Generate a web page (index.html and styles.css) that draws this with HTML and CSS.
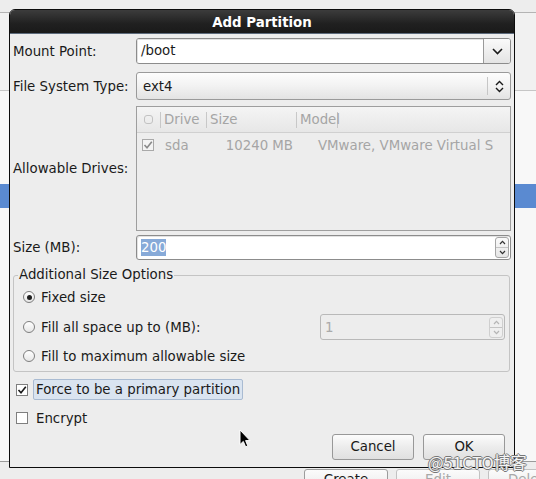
FILE: index.html
```html
<!DOCTYPE html>
<html>
<head>
<meta charset="utf-8">
<title>Add Partition</title>
<link rel="stylesheet" href="styles.css">
</head>
<body>
<div class="desk">
  <div class="band band-top"></div>
  <div class="band band-a"></div>
  <div class="band band-b"></div>
  <div class="band band-blue"></div>
  <div class="band band-c"></div>
  <div class="toolbar">
    <span class="tb-btn">Create</span>
    <span class="tb-btn dis">Edit</span>
    <span class="tb-btn dis">Delete</span>
  </div>
</div>

<div class="dialog">
  <div class="titlebar">Add Partition</div>
  <div class="dbody">
    <div class="row r-mount">
      <span class="lbl">Mount Point:</span>
      <div class="combo-entry">
        <span class="ce-text">/boot</span>
        <span class="ce-btn"><svg width="11" height="7" viewBox="0 0 11 7"><path d="M1 1 L5.5 5.5 L10 1" fill="none" stroke="#1a1a1a" stroke-width="1.6"/></svg></span>
      </div>
    </div>
    <div class="row r-fs">
      <span class="lbl">File System Type:</span>
      <div class="combo">
        <span class="cb-text">ext4</span>
        <span class="cb-sep"></span>
        <span class="cb-arrows"><svg width="9" height="13" viewBox="0 0 9 13"><path d="M1 5 L4.5 1.5 L8 5 M1 8 L4.5 11.5 L8 8" fill="none" stroke="#1a1a1a" stroke-width="1.4"/></svg></span>
      </div>
    </div>
    <div class="row r-drives">
      <span class="lbl">Allowable Drives:</span>
      <div class="list">
        <div class="lhead">
          <span class="hc hc-chk"><span class="mini-box"></span></span>
          <span class="hc hc-drive">Drive</span>
          <span class="hc hc-size">Size</span>
          <span class="hc hc-model">Model</span>
        </div>
        <div class="lrow">
          <span class="rc rc-chk"><span class="chk dis"><svg width="10" height="10" viewBox="0 0 10 10"><path d="M1.5 5 L4 7.8 L8.8 1.8" fill="none" stroke="#8a8a8a" stroke-width="1.6"/></svg></span></span>
          <span class="rc rc-drive">sda</span>
          <span class="rc rc-size">10240 MB</span>
          <span class="rc rc-model">VMware, VMware Virtual S</span>
        </div>
      </div>
    </div>
    <div class="row r-size">
      <span class="lbl">Size (MB):</span>
      <div class="spin">
        <span class="sp-text"><span class="sel">200</span></span>
        <span class="sp-btns">
          <span class="sp-b"><svg width="7" height="5" viewBox="0 0 7 5"><path d="M1 4 L3.5 1.3 L6 4" fill="none" stroke="#333" stroke-width="1.2"/></svg></span>
          <span class="sp-b"><svg width="7" height="5" viewBox="0 0 7 5"><path d="M1 1 L3.5 3.7 L6 1" fill="none" stroke="#333" stroke-width="1.2"/></svg></span>
        </span>
      </div>
    </div>

    <fieldset class="frame">
      <legend>Additional Size Options</legend>
      <div class="opt o1"><span class="radio on"></span><span>Fixed size</span></div>
      <div class="opt o2"><span class="radio"></span><span>Fill all space up to (MB):</span>
        <div class="spin small dis">
          <span class="sp-text">1</span>
          <span class="sp-btns">
            <span class="sp-b"><svg width="7" height="5" viewBox="0 0 7 5"><path d="M1 4 L3.5 1.3 L6 4" fill="none" stroke="#b5b5b5" stroke-width="1.2"/></svg></span>
            <span class="sp-b"><svg width="7" height="5" viewBox="0 0 7 5"><path d="M1 1 L3.5 3.7 L6 1" fill="none" stroke="#b5b5b5" stroke-width="1.2"/></svg></span>
          </span>
        </div>
      </div>
      <div class="opt o3"><span class="radio"></span><span>Fill to maximum allowable size</span></div>
    </fieldset>

    <div class="crow c1">
      <span class="chk"><svg width="10" height="10" viewBox="0 0 10 10"><path d="M1.5 5 L4 7.8 L8.8 1.8" fill="none" stroke="#1a1a1a" stroke-width="1.6"/></svg></span>
      <span class="focus">Force to be a primary partition</span>
    </div>
    <div class="crow c2">
      <span class="chk"></span>
      <span class="plain">Encrypt</span>
    </div>

    <div class="brow">
      <span class="btn">Cancel</span>
      <span class="btn">OK</span>
    </div>
  </div>
</div>

<div class="watermark">@51CTO博客</div>

<svg class="cursor" width="13" height="20" viewBox="0 0 13 20"><path d="M1 1 L1 15.5 L4.3 12.4 L6.6 17.8 L8.8 16.9 L6.6 11.6 L11 11.6 Z" fill="#000" stroke="#fff" stroke-width="1"/></svg>
</body>
</html>
```

FILE: styles.css
```css
* { box-sizing: border-box; }
html, body { margin: 0; padding: 0; }
body {
  width: 536px;
  height: 479px;
  overflow: hidden;
  position: relative;
  background: #ededed;
  font-family: "DejaVu Sans", "Noto Sans CJK SC", sans-serif;
  font-size: 13.33px;
  color: #1a1a1a;
}

/* background application */
.desk { display: flex; flex-direction: column; height: 479px; }
.band { flex: none; }
.band-top { height: 13px; background: #ededed; border-bottom: 1px solid #b4b4b4; }
.band-a { height: 78px; background: #f1f1f1; border-bottom: 1px solid #c6c6c6; }
.band-b { height: 93px; background: #f8f8f8; }
.band-blue { height: 24px; background: #5a8ad1; }
.band-c { height: 254px; background: #f7f7f7; border-bottom: 1px solid #9a9a9a; }
.toolbar {
  flex: 1;
  background: #ededed;
  display: flex;
  gap: 8px;
  padding: 7px 0 0 304px;
  overflow: hidden;
}
.tb-btn {
  flex: none;
  width: 84px;
  height: 26px;
  border: 1px solid #9c9c9c;
  border-radius: 3px;
  background: linear-gradient(#fbfbfb, #e6e6e6);
  text-align: center;
  line-height: 20px;
  padding-top: 0;
}
.tb-btn.dis { color: #a8a8a8; border-color: #c2c2c2; }

/* dialog */
.dialog {
  position: absolute;
  left: 9px;
  top: 9px;
  width: 506px;
  border: 1px solid #0c0c0c;
  border-radius: 6px 6px 0 0;
  background: #ededed;
}
.titlebar {
  height: 24px;
  line-height: 25px;
  text-align: center;
  font-weight: bold;
  color: #ffffff;
  background: linear-gradient(#3c3c3c, #202020 60%, #1a1a1a);
  border-radius: 5px 5px 0 0;
  border-bottom: 1px solid #5d6b7c;
}
.dbody {
  padding: 4px 3px 7px 3px;
  display: flex;
  flex-direction: column;
}
.row { display: flex; align-items: center; }
.lbl { width: 123px; flex: none; }
.r-mount { height: 26px; }
.r-fs { height: 28px; margin-top: 8px; }
.r-drives { height: 125px; margin-top: 6px; }
.r-size { height: 25px; margin-top: 4px; }

.combo-entry {
  flex: 1;
  height: 100%;
  display: flex;
  border: 1px solid #8c8c8c;
  border-radius: 3px;
  overflow: hidden;
  background: #fff;
}
.ce-text {
  flex: 1;
  padding-left: 4px;
  line-height: 24px;
  box-shadow: inset 1px 1px 0 #e2e2e2;
}
.ce-btn {
  width: 27px;
  flex: none;
  border-left: 1px solid #9a9a9a;
  background: linear-gradient(#fafafa, #e4e4e4);
  display: flex;
  align-items: center;
  justify-content: center;
}

.combo {
  flex: 1;
  height: 100%;
  display: flex;
  align-items: center;
  border: 1px solid #9a9a9a;
  border-radius: 3px;
  background: linear-gradient(#fdfdfd, #f2f2f2 50%, #e3e3e3);
}
.cb-text { flex: 1; padding-left: 6px; }
.cb-sep { width: 1px; height: 18px; background: #c6c6c6; }
.cb-arrows { width: 22px; display: flex; justify-content: center; align-items: center; }

.list {
  flex: 1;
  height: 100%;
  border: 1px solid #9e9e9e;
  background: #ededed;
  color: #a5a5a5;
  overflow: hidden;
}
.lhead {
  height: 26px;
  display: flex;
  align-items: center;
  background: linear-gradient(#f4f4f4, #e7e7e7);
  border-bottom: 1px solid #d0d0d0;
}
.hc { flex: none; height: 16px; line-height: 16px; }
.hc-chk { width: 23px; display: flex; justify-content: center; align-items: center; }
.mini-box { width: 9px; height: 9px; border: 1px solid #c2c2c2; border-radius: 3px; }
.hc-drive, .hc-size, .hc-model { border-left: 1px solid #c8c8c8; padding-left: 3px; }
.hc-drive { width: 46px; }
.hc-size { width: 90px; }
.hc-model { width: 42px; border-right: 1px solid #c8c8c8; }

.lrow { height: 24px; display: flex; align-items: center; }
.rc { flex: none; white-space: nowrap; }
.rc-chk { width: 23px; padding-left: 5px; display: flex; }
.rc-drive { width: 46px; padding-left: 5px; }
.rc-size { width: 90px; text-align: right; padding-right: 3px; }
.rc-model { padding-left: 22px; }

.spin {
  flex: 1;
  height: 100%;
  display: flex;
  align-items: center;
  border: 1px solid #8c8c8c;
  border-radius: 3px;
  background: #fff;
  box-shadow: inset 1px 1px 0 #e2e2e2;
}
.sp-text { flex: 1; padding-left: 4px; }
.sel { background: #87aad8; color: #fff; padding: 1px 0; }
.sp-btns {
  width: 14px;
  height: 21px;
  margin-right: 1px;
  display: flex;
  flex-direction: column;
  border: 1px solid #a5a5a5;
  border-radius: 3px;
  background: linear-gradient(#fafafa, #e6e6e6);
}
.sp-b { flex: 1; display: flex; align-items: center; justify-content: center; }
.sp-b + .sp-b { border-top: 1px solid #c4c4c4; }

/* frame */
.frame {
  margin: 7px 1px 0 0;
  padding: 4px 4px 5px 9px;
  border: 1px solid #c4c4c4;
  border-radius: 3px;
  min-width: 0;
}
.frame legend {
  padding: 0 1px;
  margin-left: -5px;
  line-height: 16px;
}
.opt { display: flex; align-items: center; gap: 6px; }
.o1 { height: 20px; }
.o2 { height: 26px; margin-top: 7px; }
.o3 { height: 20px; margin-top: 6px; }
.radio {
  width: 12px;
  height: 12px;
  flex: none;
  border: 1px solid #7e7e7e;
  border-radius: 50%;
  background: linear-gradient(#ffffff, #e6e6e6);
  display: flex;
  align-items: center;
  justify-content: center;
}
.radio.on::after {
  content: "";
  width: 5px;
  height: 5px;
  border-radius: 50%;
  background: #1f1f1f;
}
.spin.small {
  flex: none;
  width: 185px;
  margin-left: auto;
  height: 26px;
}
.spin.dis {
  background: #ededed;
  border-color: #b9b9b9;
  color: #aaaaaa;
  box-shadow: none;
}
.spin.dis .sp-btns { border-color: #cfcfcf; background: #efefef; }

/* check rows */
.crow { display: flex; align-items: center; }
.c1 { height: 21px; margin-top: 7px; }
.c2 { height: 20px; margin-top: 8px; }
.chk {
  width: 12px;
  height: 12px;
  flex: none;
  margin-left: 3px;
  margin-right: 5px;
  border: 1px solid #7f7f7f;
  background: #fff;
  display: flex;
  align-items: center;
  justify-content: center;
}
.chk.dis { border-color: #a9a9a9; background: #f3f3f3; margin: 0; }
.focus {
  height: 21px;
  line-height: 19px;
  padding: 0 2px;
  background: #dae4f0;
  border: 1px solid #a9bbd2;
  border-radius: 2px;
}
.plain { padding-left: 3px; }

.brow {
  margin-top: 6px;
  display: flex;
  justify-content: flex-end;
  gap: 9px;
  padding-right: 6px;
}
.btn {
  width: 82px;
  height: 26px;
  line-height: 24px;
  text-align: center;
  border: 1px solid #989898;
  border-radius: 3px;
  background: linear-gradient(#fcfcfc, #ececec 50%, #e0e0e0);
}

.watermark {
  position: absolute;
  left: 428px;
  top: 451px;
  font-family: "Noto Sans CJK SC", "DejaVu Sans", sans-serif;
  font-size: 16.5px;
  line-height: 22px;
  color: #f4f4f4;
  text-shadow: 1px 0 0 #777, -1px 0 0 #777, 0 1px 0 #777, 0 -1px 0 #777;
}
.cursor {
  position: absolute;
  left: 239px;
  top: 429px;
}
```
